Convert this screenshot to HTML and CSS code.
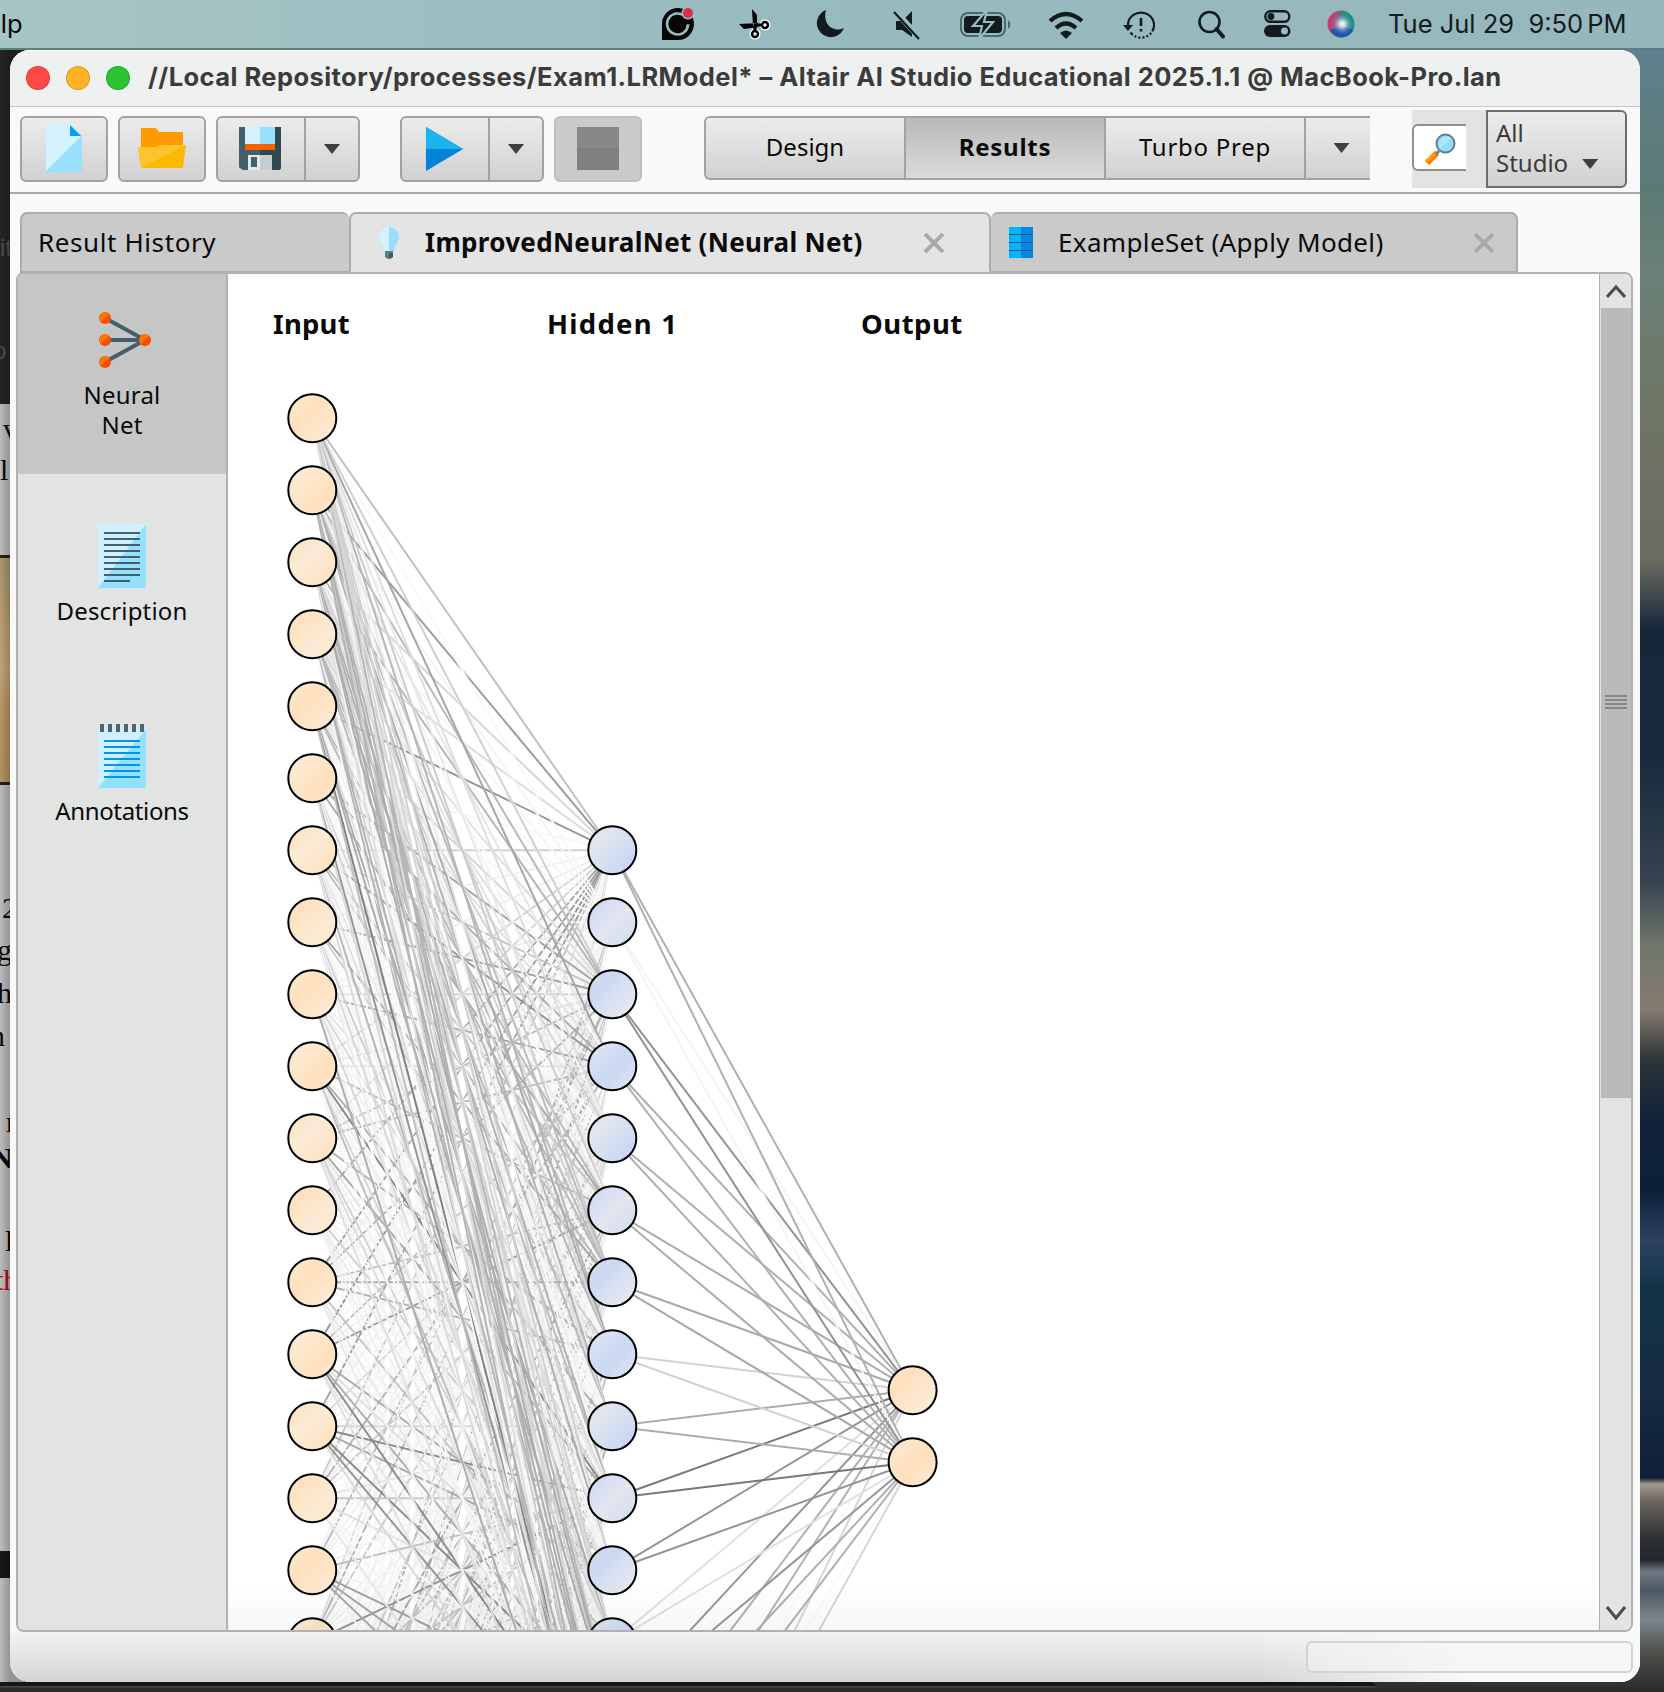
FILE: index.html
```html
<!DOCTYPE html>
<html lang="en">
<head>
<meta charset="utf-8">
<title>Altair AI Studio</title>
<link rel="stylesheet" href="styles.css">
</head>
<body>
<div class="desktop">
  <header class="menubar">
    <span class="menu-help">Help</span>
    <div class="status-icons">
      <svg class="ic" viewBox="0 0 40 40"><path d="M4 36V19A16 16 0 1 1 20 36Z" fill="#050707"/><path d="M27 12.500A10.500 10.500 0 1 0 30 21.500H21" fill="none" stroke="#98bbc0" stroke-width="2.600"/><path d="M25 16A6.500 6.500 0 1 0 26 22H20" fill="none" stroke="#050707" stroke-width="4"/><circle cx="30" cy="9" r="6.500" fill="#98bbc0"/><circle cx="30" cy="9" r="5" fill="#e02c4c"/></svg>
      <svg class="ic" viewBox="0 0 40 40"><g fill="none" stroke="#fff" stroke-width="5"><circle cx="21" cy="30" r="3"/><circle cx="31" cy="21" r="3"/></g><path d="M18 5L23 11V22H19Z M5 20L10 25L24 23V19Z"/><path d="M21 20V27M20 21H28" stroke="#000" stroke-width="3"/><g fill="none" stroke="#000" stroke-width="2.500"><circle cx="21" cy="30" r="3"/><circle cx="31" cy="21" r="3"/></g></svg>
      <svg class="ic" viewBox="0 0 40 40"><path d="M16 6A14 14 0 1 0 34 24C24 29 12 21 16 6Z" fill="#131b1e"/></svg>
      <svg class="ic mute" viewBox="0 0 40 40"><path d="M9 17H15L25 7V33L15 26H9Z" fill="#131b1e"/><path d="M8 7L33 34" stroke="#98bbc0" stroke-width="6"/><path d="M7 8L32 35" stroke="#131b1e" stroke-width="2.200"/></svg>
      <svg class="ic battery" viewBox="0 0 54 40"><rect x="2" y="9" width="44" height="23" rx="7" fill="none" stroke="#50676c" stroke-width="2"/><rect x="5" y="12" width="38" height="17" rx="4" fill="#131b1e"/><path d="M49 16Q54 20 49 25Z" fill="#50676c"/><path d="M28 6L14 22H23L20 35L34 18H25Z" fill="#131b1e" stroke="#98bbc0" stroke-width="2.200"/></svg>
      <svg class="ic wifi" viewBox="0 0 40 40"><g fill="none" stroke="#131b1e" stroke-width="4.200"><path d="M4 17Q20 3 36 17"/><path d="M10 24Q20 15 30 24"/></g><path d="M14 29Q20 24 26 29L20 35Z" fill="#131b1e"/></svg>
      <svg class="ic tm" viewBox="0 0 40 40"><path d="M7 23V21A13 12.500 0 1 1 9.500 28.500" fill="none" stroke="#131b1e" stroke-width="2.200" stroke-dasharray="48 2 2 2 2 2 2 2 2 2 2 2"/><path d="M2 21H12L7 27Z" fill="#131b1e"/><path d="M20 14V22M20 25V27.500" stroke="#131b1e" stroke-width="2.600"/></svg>
      <svg class="ic find" viewBox="0 0 40 40"><circle cx="17.500" cy="18" r="10" fill="none" stroke="#131b1e" stroke-width="2.600"/><path d="M24.500 25L31 32.500" stroke="#131b1e" stroke-width="4" stroke-linecap="round"/></svg>
      <svg class="ic cc" viewBox="0 0 40 40"><rect x="7.300" y="7.300" width="24" height="10.500" rx="5.200" fill="none" stroke="#131b1e" stroke-width="2.400"/><circle cx="13" cy="12.500" r="3.400" fill="#131b1e"/><rect x="6" y="21" width="26.500" height="12" rx="6" fill="#131b1e"/><circle cx="26.500" cy="27" r="3.500" fill="#98bbc0"/></svg>
      <svg class="ic siri" viewBox="0 0 40 40"><defs><radialGradient id="siri-glow" cx=".55" cy=".5" r=".4"><stop offset="0" stop-color="#fff"/><stop offset=".3" stop-color="#eceaf8" stop-opacity=".8"/><stop offset="1" stop-color="#6c7bd0" stop-opacity="0"/></radialGradient><linearGradient id="siri-base" x1="0" y1=".3" x2="1" y2=".5"><stop offset="0" stop-color="#e02c6a"/><stop offset=".3" stop-color="#a0527f"/><stop offset=".55" stop-color="#218e73"/><stop offset="1" stop-color="#1f8f8c"/></linearGradient></defs><circle cx="19" cy="20" r="13.500" fill="url(#siri-base)"/><path d="M8 26Q20 20 31.500 26Q27 33.500 19 33.500Q12 33 8 26Z" fill="#1c5ba8"/><circle cx="19" cy="20" r="13" fill="url(#siri-glow)"/></svg>
    </div>
    <span class="clock">Tue Jul 29&nbsp; 9:50<span class="pm">PM</span></span>
  </header>

  <div class="behind">
    <div class="dark-panel"></div>
    <div class="wood"></div>
    <div class="dark-bar"></div>
    <span class="frag f0">it</span><span class="frag f00">o</span>
    <span class="frag f1">v</span><span class="frag f2">l</span><span class="frag f3">2</span><span class="frag f4">g</span><span class="frag f5">h</span><span class="frag f6">n</span><span class="frag f7">r</span><span class="frag f8">N</span><span class="frag f9">l</span><span class="frag f10">th</span>
  </div>

  <main class="window">
    <div class="titlebar">
      <i class="light red"></i><i class="light amber"></i><i class="light green"></i>
      <span class="title">//Local Repository/processes/Exam1.LRModel* – Altair AI Studio Educational 2025.1.1 @ MacBook-Pro.lan</span>
    </div>

    <div class="toolbar">
      <div class="btn one"><svg width="36" height="48" viewBox="0 0 36 48"><path d="M0 0H24L36 12V48H0Z" fill="#9be0fc"/><path d="M0 0H24L35 12L0 47Z" fill="#d4f2ff"/><path d="M24 1V12H35Z" fill="#00a5f2"/></svg></div>
      <div class="btn one"><svg width="48" height="40" viewBox="0 0 48 40"><path d="M3 22V0H18L21 4H45V22Z" fill="#ff9a00"/><path d="M0 19H18L22 17H48L45 40H3Z" fill="#fdb900"/><path d="M0 19H18L22 17H48L3 40Z" fill="#fec42d"/></svg></div>
      <div class="btn split"><div class="main"><svg width="42" height="43" viewBox="0 0 42 43"><path d="M0 0H42V41Q42 43 40 43H4L0 40Z" fill="#30484f"/><path d="M0 0H21V43H4L0 40Z" fill="#425f6b"/><path d="M6 0H21V17H6Z" fill="#d4f2ff"/><path d="M21 0H36V17H21Z" fill="#9be0fc"/><path d="M6 17H36V23H6Z" fill="#f96100"/><path d="M9 28H21V43H9Z" fill="#e4e9e9"/><path d="M21 28H33V43H21Z" fill="#c2cecf"/><path d="M12 30H18V40H12Z" fill="#425f6b"/></svg></div><div class="drop"><i class="arrow"></i></div></div>
      <div class="btn split run"><div class="main"><svg width="37" height="44" viewBox="0 0 37 44"><path d="M0 0L37 22L0 44Z" fill="#0083d8"/><path d="M0 0L37 22H0Z" fill="#1bb4ef"/></svg></div><div class="drop"><i class="arrow"></i></div></div>
      <div class="btn one stop"><i></i></div>
      <div class="views">
        <div class="view design">Design</div><div class="view on">Results</div><div class="view turbo">Turbo Prep</div><div class="view more"><i class="arrow"></i></div>
      </div>
      <div class="search">
        <div class="field"><svg width="32" height="32" viewBox="0 0 32 32"><path d="M12 20L2 30" stroke="#ff7c00" stroke-width="6"/><path d="M11 19L1 29" stroke="#ffa000" stroke-width="2.500"/><path d="M14 18L11 21" stroke="#5d7f8c" stroke-width="3"/><circle cx="20.500" cy="10.500" r="9" fill="#92ddfb" stroke="#5d7f8c" stroke-width="2"/><path d="M15 16A8 8 0 0 1 26 5Z" fill="#ace7fd"/></svg></div>
      </div>
      <div class="combo"><span>All<br>Studio</span><i class="arrow"></i></div>
    </div>

    <div class="tabs">
      <div class="tab t1"><span class="lbl-history">Result History</span></div>
      <div class="tab t2 active">
        <svg width="20" height="32" viewBox="0 0 20 32"><path d="M5 24Q5 20 2 16A10 10 0 1 1 18 16Q15 20 15 24Z" fill="#99dffb"/><path d="M10 0V24H5Q5 20 2 16A10 10 0 0 1 10 0Z" fill="#d4f2ff"/><path d="M6 24H14V30Q10 34 6 30Z" fill="#607f8a"/><path d="M10 26H14V30L10 32Z" fill="#405b66"/></svg>
        <span class="lbl-net">ImprovedNeuralNet (Neural Net)</span>
        <svg class="close" width="20" height="20" viewBox="0 0 20 20"><path d="M1 1L19 19M19 1L1 19"/></svg>
      </div>
      <div class="tab t3">
        <svg width="24" height="31" viewBox="0 0 24 31"><path d="M0 0H24V31H0Z" fill="#0088e3"/><path d="M0 0H12V31H0Z" fill="#00b5fb"/><path d="M0 7.500H24M0 15.500H24M0 23.500H24" stroke="#0c5980" stroke-width="1.200"/></svg>
        <span class="lbl-set">ExampleSet (Apply Model)</span>
        <svg class="close" width="20" height="20" viewBox="0 0 20 20"><path d="M1 1L19 19M19 1L1 19"/></svg>
      </div>
    </div>

    <div class="panel">
      <nav class="side">
        <div class="item selected">
          <svg width="52" height="58" viewBox="0 0 52 58"><path d="M6 7L46 29L6 51M6 29H46" fill="none" stroke="#445f6b" stroke-width="4"/><g fill="#ff4a00"><circle cx="6" cy="7" r="6"/><circle cx="6" cy="29" r="6"/><circle cx="6" cy="51" r="6"/><circle cx="46" cy="29" r="6"/></g><g fill="#ff7b00"><path id="half" d="M1.800 11.200A6 6 0 0 1 10.200 2.800Z"/><use href="#half" y="22"/><use href="#half" y="44"/><use href="#half" x="40" y="22"/></g></svg>
          <span class="cap-neural">Neural<br>Net</span>
        </div>
        <div class="item desc">
          <svg width="48" height="64" viewBox="0 0 48 64"><path d="M0 0H48V64H0Z" fill="#94e0ff"/><path d="M0 0H48L0 64Z" fill="#cff1ff"/><path d="M6 9H42M6 15H42M6 21H42M6 27H42M6 33H42M6 39H42M6 45H42M6 51H42M6 57H32" stroke="#46616d" stroke-width="2"/></svg>
          <span class="cap-desc">Description</span>
        </div>
        <div class="item ann">
          <svg width="48" height="64" viewBox="0 0 48 64"><path d="M0 5H48V64H0Z" fill="#94e0ff"/><path d="M0 5H48L0 64Z" fill="#cff1ff"/><path d="M6 17H42M6 23H42M6 29H42M6 35H42M6 41H42M6 47H42M6 53H42" stroke="#0495ea" stroke-width="2"/><path d="M4 0V8M12 0V8M20 0V8M28 0V8M36 0V8M44 0V8" stroke="#4c6570" stroke-width="4"/></svg>
          <span class="cap-ann">Annotations</span>
        </div>
      </nav>
      <section class="canvas">
        <span class="layer l-input">Input</span><span class="layer l-hidden">Hidden 1</span><span class="layer l-output">Output</span>
        <svg class="net" id="net" viewBox="228 274 1372 1357" width="1372" height="1357">
          <defs>
            <linearGradient id="warm" gradientUnits="userSpaceOnUse" x1="360" y1="362.500" x2="384" y2="386.500" spreadMethod="reflect"><stop offset="0" stop-color="#ffe0bd"/><stop offset="1" stop-color="#faebd7"/></linearGradient>
            <linearGradient id="cool" gradientUnits="userSpaceOnUse" x1="360" y1="362.500" x2="384" y2="386.500" spreadMethod="reflect"><stop offset="0" stop-color="#cad8f3"/><stop offset="1" stop-color="#e4e6ef"/></linearGradient>
            <linearGradient id="out" gradientUnits="userSpaceOnUse" x1="903" y1="1380" x2="927" y2="1404" spreadMethod="reflect"><stop offset="0" stop-color="#ffe0bd"/><stop offset="1" stop-color="#faebd7"/></linearGradient>
          </defs>
        </svg>
      </section>
      <div class="scroll">
        <div class="step"><svg width="20" height="14" viewBox="0 0 20 14"><path d="M1 13L10 3L19 13"/></svg></div>
        <div class="thumb"><i></i><i></i><i></i><i></i></div>
        <div class="step down"><svg width="20" height="14" viewBox="0 0 20 14"><path d="M1 1L10 12L19 1"/></svg></div>
      </div>
    </div>
    <footer class="statusbar"><div class="progress"></div></footer>
  </main>
</div>
<script src="net.js"></script>
</body>
</html>
```
FILE: styles.css
```css
* { box-sizing: border-box; }
body { margin: 0; overflow: hidden; font-family: "Noto Sans", "Open Sans", sans-serif; color: #0a0a0a; }
svg { display: block; flex: none; }
.desktop {
  position: relative; z-index: 0; width: 1664px; height: 1692px; overflow: hidden; display: flex; flex-direction: column;
  background: linear-gradient(180deg, #5f808e 50px, #5c7a74 190px, #6a8078 270px, #6f7766 400px, #6b6b60 560px, #16273a 630px, #182b3e 760px, #364250 880px, #70766a 945px, #857a70 1010px, #2d3536 1060px, #10233b 1120px, #0c2038 1190px, #2c4260 1240px, #123347 1290px, #162b44 1390px, #101f38 1478px, #a29a8c 1484px, #6d675f 1500px, #2b2f33 1540px, #23272b 1560px, #6f7a84 1572px, #4c5864 1590px, #7c868c 1620px, #50534e 1650px, #292a29 1692px);
}
.desktop::after { content: ""; position: absolute; left: 0; bottom: 0; width: 1377px; height: 10px; background: linear-gradient(#161616 4px, #484946 4px 5px, #2c2b29 6px); z-index: -1; border-top-right-radius: 8px; }
.menubar { height: 50px; display: flex; align-items: flex-start; padding-right: 36px; background: linear-gradient(90deg, #a6c5c5, #98bbc0 45%, #96b7bc); border-bottom: 2px solid #5f7b80; position: relative; font-family: Inter, sans-serif; font-size: 25.500px; line-height: 47px; color: #131b1e; }
.menu-help { width: 658px; text-indent: -33px; color: #050808; }
.status-icons { display: flex; padding-top: 4px; }
.ic { width: 40px; height: 40px; margin-left: 36px; }
.ic:first-child { margin-left: 0; }
.ic.mute { margin-left: 37px; }
.ic.battery { width: 54px; margin-left: 32px; }
.ic.wifi { margin-left: 33px; }
.ic.tm { margin-left: 35px; }
.ic.find { margin-left: 31px; }
.ic.cc { margin-left: 26px; }
.ic.siri { margin-left: 24px; }
.clock { margin-left: 26px; white-space: pre; }
.pm { margin-left: 4px; }

.behind { position: absolute; left: 0; top: 50px; width: 24px; height: 1632px; background: linear-gradient(180deg, #222 0 354px, #c9c9c9 354px); overflow: hidden; font: 30px "Liberation Serif", serif; }
.wood { position: absolute; top: 505px; width: 24px; height: 230px; background: linear-gradient(#b8a077, #d0b080 50%, #c6a06c 70%, #bf9c68); border: solid #2d211b; border-width: 3px 0; }
.dark-bar { position: absolute; top: 1501px; width: 24px; height: 27px; background: #181818; }
.dark-panel { position: absolute; width: 24px; height: 354px; background: #272727; }
.behind::after { content: ""; position: absolute; inset: 0; background: linear-gradient(90deg, #0001, #0004 10px); }
.frag { position: absolute; line-height: 30px; }
.f0 { left: 0; top: 184px; font: 24px "Liberation Sans", sans-serif; color: #555; }
.f00 { left: -7px; top: 287px; font: 24px "Liberation Sans", sans-serif; color: #555; }
.f1 { left: 3px; top: 364px; } .f2 { left: 0; top: 405px; } .f3 { left: 2px; top: 843px; } .f4 { left: -3px; top: 885px; }
.f5 { left: -3px; top: 928px; } .f6 { left: -10px; top: 971px; } .f7 { left: 6px; top: 1057px; } .f8 { left: -9px; top: 1093px; font-weight: bold; }
.f9 { left: 5px; top: 1176px; } .f10 { left: -5px; top: 1215px; color: #d00010; }

.window { position: relative; margin-left: 10px; width: 1630px; height: 1632px; display: flex; flex-direction: column; background: #f9f9f9; border-radius: 20px; overflow: hidden; }
.titlebar { height: 57px; flex: none; display: flex; align-items: center; gap: 16px; padding: 0 0 1px 16px; background: #eff1f0; border-bottom: 1px solid #c5c7c6; border-top: 1px solid #fff; }
.light { width: 24px; height: 24px; border-radius: 50%; border: 1px solid #0002; flex: none; }
.red { background: #ff4848; } .amber { background: #ffb225; } .green { background: #2ac331; }
.title { font: 700 25.500px/54px Inter, sans-serif; color: #3b3b3b; white-space: nowrap; margin-left: 2px; letter-spacing: .44px; margin-top: -2px; }

.toolbar { height: 87px; flex: none; display: flex; align-items: flex-start; padding: 9px 0 0 10px; border-bottom: 2px solid #a9a9a9; }
.btn { height: 66px; border: 2px solid #a2a2a2; border-radius: 6px; background: linear-gradient(#ececec, #d1d1d1); display: flex; align-items: center; justify-content: center; }
.one { width: 88px; margin-right: 10px; }
.one svg { margin-top: -2px; }
.split { width: 144px; margin-right: 40px; justify-content: stretch; }
.split .main { width: 88px; height: 100%; border-right: 2px solid #a2a2a2; display: flex; align-items: center; justify-content: center; padding: 0 2px 1px 0; }
.split .drop { flex: 1; display: flex; justify-content: center; }
.split.run { margin-right: 10px; }
.arrow { width: 16px; height: 10px; background: #3f3f3f; clip-path: polygon(0 0, 100% 0, 50% 100%); }
.stop { background: #cacaca; border-color: #bebebe; margin: 0; }
.stop i { width: 42px; height: 43px; margin-top: -1px; background: linear-gradient(#888 50%, #808080 50%); }
.views { width: 666px; height: 64px; margin-left: 62px; display: flex; border: 2px solid #a2a2a2; border-right: 0; border-radius: 6px 0 0 6px; background: linear-gradient(#ececec, #d1d1d1); overflow: hidden; font-size: 24px; line-height: 58px; text-align: center; }
.view { width: 200px; border-right: 2px solid #a2a2a2; letter-spacing: .75px; }
.view.design { letter-spacing: 0; }
.view.on { font-weight: 700; background: linear-gradient(#b9b9b9, #dadada); }
.view.more { flex: 1; border: 0; display: flex; align-items: center; justify-content: center; padding-left: 7px; }
.search { width: 74px; height: 78px; margin: -6px 0 0 42px; background: #e2e4e3; padding-top: 14px; }
.field { width: 54px; height: 47px; background: #fff; border: 2px solid #8f8f8f; border-right: 0; border-radius: 6px 0 0 6px; padding: 7px 0 0 11px; }
.combo { width: 141px; height: 78px; margin-top: -6px; border: 2px solid #6d6d6d; border-radius: 0 6px 6px 0; background: linear-gradient(#ececec, #d1d1d1); display: flex; font-size: 24px; line-height: 30px; color: #3a3a3a; padding: 6px 0 0 8px; }
.combo .arrow { margin: 41px 0 0 14px; }

.tabs { height: 80px; flex: none; padding: 18px 0 0 10px; display: flex; font-size: 26px; line-height: 34px; }
.tab { height: 61px; border: 2px solid #acacac; background: #cacaca; border-radius: 7px 7px 0 0; display: flex; align-items: center; white-space: nowrap; }
.tab span { margin-top: -1px; }
.t1 { width: 329px; padding-left: 16px; border-right: 0; }
.t2 { width: 642px; padding-left: 28px; }
.t3 { width: 527px; padding-left: 18px; border-left: 0; }
.tab.active { background: #e4e4e4; border-bottom-color: #e4e4e4; }
.close { fill: none; stroke: #a9a9a9; stroke-width: 4; margin-left: auto; }
.t2 .close { margin-right: 45px; } .t3 .close { margin-right: 22px; }
.lbl-history { letter-spacing: .6px; }
.tab .lbl-net { font-weight: 700; margin-left: 26px; letter-spacing: .3px; }
.tab .lbl-set { margin-left: 25px; letter-spacing: .35px; }

.panel { width: 1617px; margin: -2px 0 0 6px; height: 1360px; flex: none; display: flex; border: 2px solid #b1b1b1; border-radius: 8px; overflow: hidden; background: #fff; }
.side { width: 210px; flex: none; background: #e2e4e3; border-right: 2px solid #b0b2b1; text-align: center; font-size: 24px; line-height: 30px; }
.item { height: 200px; display: flex; flex-direction: column; align-items: center; }
.selected { background: #c5c7c6; padding-top: 37px; gap: 11px; }
.selected svg { margin-left: 5px; }
.desc { padding-top: 50px; gap: 8px; }
.ann { padding-top: 50px; gap: 8px; }
.cap-neural { letter-spacing: .2px; }
.cap-desc { letter-spacing: .15px; }
.cap-ann { letter-spacing: -.35px; }
.canvas { position: relative; flex: 1; height: 1356px; overflow: hidden; }
.layer { position: absolute; top: 31px; font-size: 27.500px; line-height: 38px; font-weight: 700; }
.l-input { left: 45px; letter-spacing: .2px; } .l-hidden { left: 319px; letter-spacing: 1.250px; } .l-output { left: 633px; letter-spacing: .5px; }
.canvas::after { content: ""; position: absolute; inset: auto 0 0; height: 50px; background: linear-gradient(#0000, #00000008); }
.scroll { width: 32px; flex: none; background: #e2e4e3; border-left: 1px solid #b0b0b0; display: flex; flex-direction: column; }
.step { height: 34px; display: flex; justify-content: center; align-items: center; }
.step svg { fill: none; stroke: #4b4b4b; stroke-width: 3; }
.step.down { margin-top: auto; height: 34px; }
.thumb { height: 790px; margin-left: 1px; background: #b9bbba; display: flex; flex-direction: column; align-items: center; justify-content: center; gap: 2px; padding-bottom: 2px; }
.thumb i { width: 22px; height: 2px; background: #858786; }
.statusbar { flex: 1; background: linear-gradient(90deg, #f9f9f900 1250px, #f9f9f9 1460px), linear-gradient(#f3f3f3, #d4d4d4); display: flex; justify-content: flex-end; padding: 9px 7px 0 0; }
.progress { width: 327px; height: 32px; border: 2px solid #d3d3d3; border-radius: 6px; background: #f4f4f480; }
```
FILE: net.js
```js
(function () {
  var NS = 'http://www.w3.org/2000/svg';
  var svg = document.getElementById('net');
  var STEP = 72;
  var input = { x: 312.3, y: 418.3, n: 29 };
  var hidden = { x: 612.3, y: 850.3, n: 17 };
  var output = { x: 912.6, y: 1390.3, n: 2 };

  function add(tag, attrs) {
    var el = document.createElementNS(NS, tag);
    for (var k in attrs) el.setAttribute(k, attrs[k]);
    svg.appendChild(el);
  }
  function edge(a, i, b, j, g) {
    add('line', {
      x1: a.x, y1: a.y + i * STEP, x2: b.x, y2: b.y + j * STEP,
      stroke: 'rgb(' + g + ',' + g + ',' + g + ')', 'stroke-width': 2
    });
  }

  // Edge shades for the strongest weights, keyed "input-hidden" (1-based).
  var strong = {
    '1-1': 192, '1-2': 248, '1-3': 208, '1-4': 166, '1-5': 222,
    '2-1': 156, '2-2': 244, '2-3': 186, '3-1': 214, '3-2': 246, '4-1': 220, '4-2': 246,
    '5-1': 150, '5-2': 246, '6-1': 246, '6-2': 248, '7-1': 208, '7-2': 248, '8-1': 240, '8-2': 246,
    '9-1': 238, '10-1': 212, '11-1': 214, '12-1': 170, '13-1': 160, '14-1': 150, '15-1': 160,
    '6-3': 166, '7-3': 196, '8-3': 160, '9-3': 210, '7-4': 150, '9-4': 166, '10-4': 222,
    '5-15': 128, '6-15': 150, '10-10': 136, '14-14': 140, '15-14': 150, '15-13': 140,
    '15-10': 140, '16-10': 200, '17-13': 160, '17-14': 166, '18-10': 150, '14-6': 160
  };

  // Remaining weights are spread towards the faint end.
  var seed = 20250729;
  function rnd() {
    seed = (seed * 1664525 + 1013904223) % 4294967296;
    return seed / 4294967296;
  }
  for (var j = 0; j < hidden.n - 1; j++) {
    for (var i = 0; i < input.n; i++) {
      var r = rnd(), s = rnd();
      var g = r < .5 ? 240 + s * 12 : r < .8 ? 205 + s * 30 : 165 + s * 35;
      // Shallow edges of the middle inputs are mostly faint, steep ones stronger.
      if (r < .75 && i > 9 && j < 10) g = 238 + s * 12;
      if (i < 5 && j > 3 && j < 7) g = r < .6 ? 226 + s * 22 : 184 + s * 30;
      if (j - i > 5) g = r < .36 ? 236 + s * 12 : r < .66 ? 200 + s * 25 : 168 + s * 22;
      var key = (i + 1) + '-' + (j + 1);
      edge(input, i, hidden, j, key in strong ? strong[key] : Math.round(g));
    }
  }

  var toOutput = [176, 244, 146, 176, 176, 172, 168, 210, 172, 120, 148, 224, 150, 176, 176, 250, 214];
  for (var o = 0; o < output.n; o++) {
    toOutput.forEach(function (g, h) { edge(hidden, h, output, o, g); });
  }

  [[input, 'warm'], [hidden, 'cool'], [output, 'out']].forEach(function (p) {
    for (var k = 0; k < p[0].n; k++) {
      add('circle', { cx: p[0].x, cy: p[0].y + k * STEP, r: 24, fill: 'url(#' + p[1] + ')', stroke: '#000', 'stroke-width': 2 });
    }
  });
})();
```
